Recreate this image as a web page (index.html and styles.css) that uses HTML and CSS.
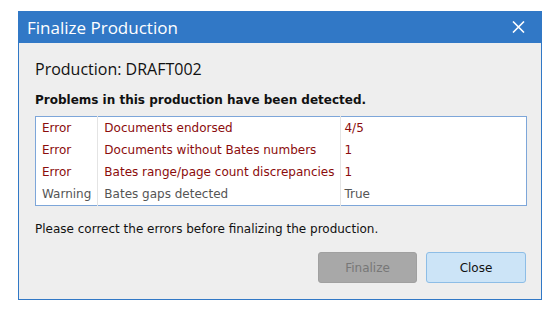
FILE: index.html
```html
<!DOCTYPE html>
<html>
<head>
  <title>Finalize Production</title>
  <link rel="stylesheet" href="styles.css">
</head>
<body>
  <div class="dialog">
    <div class="title-bar">
      <span class="title">Finalize Production</span>
      <svg class="close" width="13" height="12" viewBox="0 0 13 12">
        <path d="M1 0.5 L12 11.5 M12 0.5 L1 11.5" stroke="#ffffff" stroke-width="1.6" fill="none"/>
      </svg>
    </div>
    <div class="content">
      <div class="production">Production: DRAFT002</div>
      <div class="headline">Problems in this production have been detected.</div>
      <table class="problems">
        <tr class="error">
          <td class="level">Error</td>
          <td class="desc">Documents endorsed</td>
          <td class="value">4/5</td>
        </tr>
        <tr class="error">
          <td class="level">Error</td>
          <td class="desc">Documents without Bates numbers</td>
          <td class="value">1</td>
        </tr>
        <tr class="error">
          <td class="level">Error</td>
          <td class="desc">Bates range/page count discrepancies</td>
          <td class="value">1</td>
        </tr>
        <tr class="warning">
          <td class="level">Warning</td>
          <td class="desc">Bates gaps detected</td>
          <td class="value">True</td>
        </tr>
      </table>
      <div class="note">Please correct the errors before finalizing the production.</div>
      <div class="buttons">
        <button type="button" class="btn btn-disabled" disabled>Finalize</button>
        <button type="button" class="btn btn-close">Close</button>
      </div>
    </div>
  </div>
</body>
</html>
```

FILE: styles.css
```css
body {
  margin: 0;
  padding: 11px 0 0 18px;
  background-color: #ffffff;
  font-family: "DejaVu Sans", Verdana, sans-serif;
}

.dialog {
  width: 524px;
  height: 289px;
  display: flex;
  flex-direction: column;
}

.title-bar {
  height: 32px;
  background-color: #3178c6;
  display: flex;
  align-items: center;
  justify-content: space-between;
  padding: 0 17px 0 9px;
}

.title-bar .title {
  color: #ffffff;
  font-family: "Open Sans", "Noto Sans", sans-serif;
  font-size: 17px;
}

.content {
  flex: 1;
  background-color: #eeeeee;
  border: 1px solid #3178c6;
  border-top: none;
  padding: 16px 15px 16px 16px;
  display: flex;
  flex-direction: column;
}

.production {
  font-family: "Open Sans", "Noto Sans", sans-serif;
  font-size: 16px;
  line-height: 20px;
  color: #111111;
}

.headline {
  margin-top: 11px;
  font-size: 12px;
  font-weight: bold;
  line-height: 20px;
  color: #111111;
}

.problems {
  margin-top: 6px;
  width: 492px;
  border-collapse: collapse;
  border: 1px solid #7da6d9;
  background-color: #ffffff;
  font-size: 12px;
}

.problems td {
  height: 22px;
  padding: 0 6px;
  white-space: nowrap;
  border-left: 1px solid #e4e4e4;
}

.problems td.level {
  width: 49px;
  border-left: none;
}

.problems td.desc {
  width: 228px;
}

.problems td.value {
  padding-left: 3px;
}

.problems .error td {
  color: #8b0c0c;
}

.problems .warning td {
  color: #555555;
}

.note {
  margin-top: 13px;
  font-size: 12px;
  line-height: 20px;
  color: #111111;
}

.buttons {
  margin-top: 13px;
  display: flex;
  justify-content: flex-end;
  gap: 9px;
}

.btn {
  height: 31px;
  border-radius: 3px;
  font-family: "DejaVu Sans", Verdana, sans-serif;
  font-size: 12px;
}

.btn-disabled {
  width: 99px;
  background-color: #a8a8a8;
  border: 1px solid #a0a0a0;
  color: #777777;
}

.btn-close {
  width: 100px;
  background-color: #cce4f7;
  border: 1px solid #8dbde6;
  color: #111111;
}
```
